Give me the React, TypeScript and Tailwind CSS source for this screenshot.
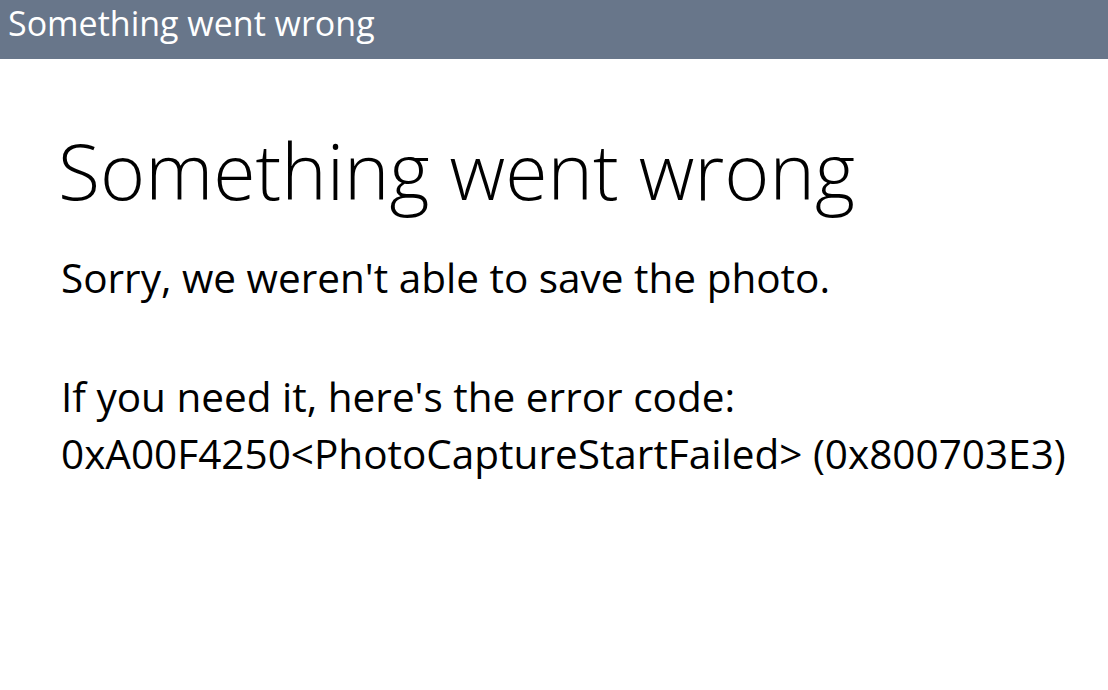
export default function App() {
    return (
        <div className="w-[1108px] h-[690px] bg-white overflow-hidden font-['Open_Sans',sans-serif]">
            {/* Title bar */}
            <div className="h-[59px] bg-[#68768a] pl-[8px]">
                <h1 className="text-[34px] leading-[46px] text-white">Something went wrong</h1>
            </div>

            {/* Error body */}
            <div className="pl-[58px] pt-[62px] text-black">
                <h2 className="text-[77px] leading-[100px] font-light">Something went wrong</h2>
                <p className="mt-[28px] pl-[3px] text-[40.5px] leading-[57px]">Sorry, we weren't able to save the photo.</p>
                <p className="mt-[62px] pl-[3px] text-[40.5px] leading-[57px]">
                    If you need it, here's the error code:
                    <br />
                    0xA00F4250&lt;PhotoCaptureStartFailed&gt; (0x800703E3)
                </p>
            </div>
        </div>
    );
}
